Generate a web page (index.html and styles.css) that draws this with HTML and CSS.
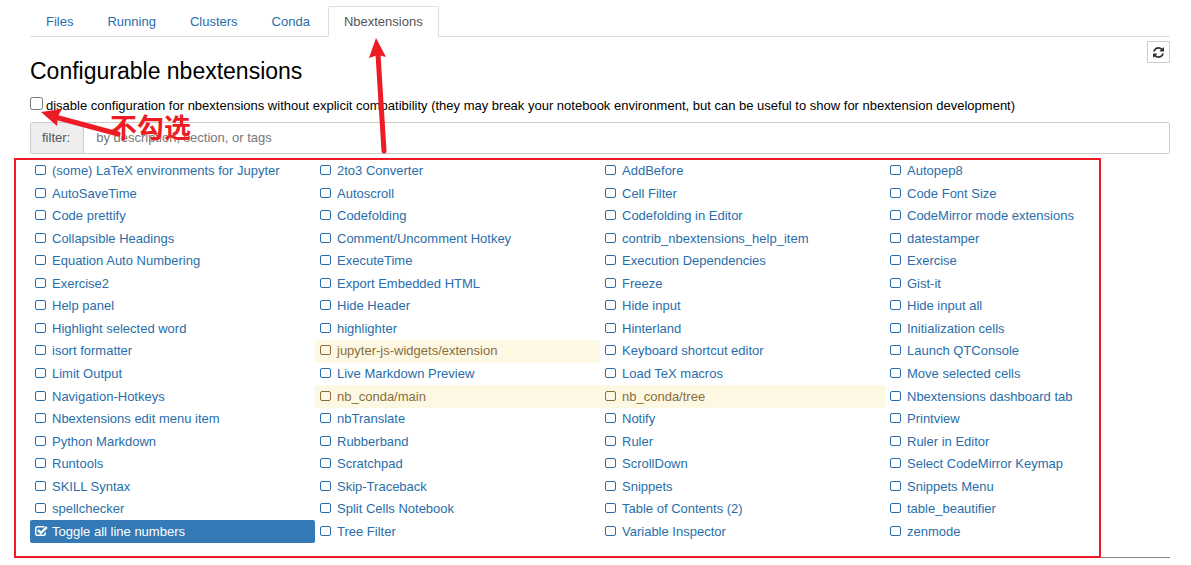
FILE: index.html
```
<!DOCTYPE html>
<html lang="en">
<head>
<meta charset="utf-8">
<title>Nbextensions</title>
<link rel="stylesheet" href="styles.css">
</head>
<body>
<div class="page">
  <nav class="tabs">
    <a class="tab" href="#files">Files</a>
    <a class="tab" href="#running">Running</a>
    <a class="tab" href="#clusters">Clusters</a>
    <a class="tab" href="#conda">Conda</a>
    <a class="tab tab-active" href="#nbextensions" aria-current="page">Nbextensions</a>
  </nav>
  <main>
    <div class="header">
      <h1 class="title">Configurable nbextensions</h1>
      <button class="refresh" type="button" aria-label="Refresh">
        <svg class="refresh-icon" viewBox="0 0 1536 1536" aria-hidden="true"><path fill="currentColor" d="M1511 928q0 5-1 7-64 268-268 434.500T764 1536q-146 0-282.500-55T238 1324l-129 129q-19 19-45 19t-45-19-19-45V960q0-26 19-45t45-19h448q26 0 45 19t19 45-19 45l-137 137q71 66 161 102t187 36q134 0 250-65t186-179q11-17 53-117 8-23 30-23h192q13 0 22.500 9.500t9.500 22.500zm25-800v448q0 26-19 45t-45 19h-448q-26 0-45-19t-19-45 19-45l138-138Q969 256 768 256q-134 0-250 65T332 500q-11 17-53 117-8 23-30 23H50q-13 0-22.500-9.500T18 608v-7q65-268 270-434.500T768 0q146 0 284 55.500T1297 212l130-129q19-19 45-19t45 19 19 45z"/></svg>
      </button>
    </div>
    <label class="compat"><input class="compat-box" type="checkbox"><span>disable configuration for nbextensions without explicit compatibility (they may break your notebook environment, but can be useful to show for nbextension development)</span></label>
    <div class="filter">
      <label class="filter-label" for="filter">filter:</label>
      <input class="filter-input" id="filter" type="text" placeholder="by description, section, or tags">
    </div>
    <ul class="extensions">
      <li><label class="ext"><input class="box" type="checkbox">(some) LaTeX environments for Jupyter</label></li>
      <li><label class="ext"><input class="box" type="checkbox">2to3 Converter</label></li>
      <li><label class="ext"><input class="box" type="checkbox">AddBefore</label></li>
      <li><label class="ext"><input class="box" type="checkbox">Autopep8</label></li>
      <li><label class="ext"><input class="box" type="checkbox">AutoSaveTime</label></li>
      <li><label class="ext"><input class="box" type="checkbox">Autoscroll</label></li>
      <li><label class="ext"><input class="box" type="checkbox">Cell Filter</label></li>
      <li><label class="ext"><input class="box" type="checkbox">Code Font Size</label></li>
      <li><label class="ext"><input class="box" type="checkbox">Code prettify</label></li>
      <li><label class="ext"><input class="box" type="checkbox">Codefolding</label></li>
      <li><label class="ext"><input class="box" type="checkbox">Codefolding in Editor</label></li>
      <li><label class="ext"><input class="box" type="checkbox">CodeMirror mode extensions</label></li>
      <li><label class="ext"><input class="box" type="checkbox">Collapsible Headings</label></li>
      <li><label class="ext"><input class="box" type="checkbox">Comment/Uncomment Hotkey</label></li>
      <li><label class="ext"><input class="box" type="checkbox">contrib_nbextensions_help_item</label></li>
      <li><label class="ext"><input class="box" type="checkbox">datestamper</label></li>
      <li><label class="ext"><input class="box" type="checkbox">Equation Auto Numbering</label></li>
      <li><label class="ext"><input class="box" type="checkbox">ExecuteTime</label></li>
      <li><label class="ext"><input class="box" type="checkbox">Execution Dependencies</label></li>
      <li><label class="ext"><input class="box" type="checkbox">Exercise</label></li>
      <li><label class="ext"><input class="box" type="checkbox">Exercise2</label></li>
      <li><label class="ext"><input class="box" type="checkbox">Export Embedded HTML</label></li>
      <li><label class="ext"><input class="box" type="checkbox">Freeze</label></li>
      <li><label class="ext"><input class="box" type="checkbox">Gist-it</label></li>
      <li><label class="ext"><input class="box" type="checkbox">Help panel</label></li>
      <li><label class="ext"><input class="box" type="checkbox">Hide Header</label></li>
      <li><label class="ext"><input class="box" type="checkbox">Hide input</label></li>
      <li><label class="ext"><input class="box" type="checkbox">Hide input all</label></li>
      <li><label class="ext"><input class="box" type="checkbox">Highlight selected word</label></li>
      <li><label class="ext"><input class="box" type="checkbox">highlighter</label></li>
      <li><label class="ext"><input class="box" type="checkbox">Hinterland</label></li>
      <li><label class="ext"><input class="box" type="checkbox">Initialization cells</label></li>
      <li><label class="ext"><input class="box" type="checkbox">isort formatter</label></li>
      <li><label class="ext ext-warning"><input class="box" type="checkbox">jupyter-js-widgets/extension</label></li>
      <li><label class="ext"><input class="box" type="checkbox">Keyboard shortcut editor</label></li>
      <li><label class="ext"><input class="box" type="checkbox">Launch QTConsole</label></li>
      <li><label class="ext"><input class="box" type="checkbox">Limit Output</label></li>
      <li><label class="ext"><input class="box" type="checkbox">Live Markdown Preview</label></li>
      <li><label class="ext"><input class="box" type="checkbox">Load TeX macros</label></li>
      <li><label class="ext"><input class="box" type="checkbox">Move selected cells</label></li>
      <li><label class="ext"><input class="box" type="checkbox">Navigation-Hotkeys</label></li>
      <li><label class="ext ext-warning"><input class="box" type="checkbox">nb_conda/main</label></li>
      <li><label class="ext ext-warning"><input class="box" type="checkbox">nb_conda/tree</label></li>
      <li><label class="ext"><input class="box" type="checkbox">Nbextensions dashboard tab</label></li>
      <li><label class="ext"><input class="box" type="checkbox">Nbextensions edit menu item</label></li>
      <li><label class="ext"><input class="box" type="checkbox">nbTranslate</label></li>
      <li><label class="ext"><input class="box" type="checkbox">Notify</label></li>
      <li><label class="ext"><input class="box" type="checkbox">Printview</label></li>
      <li><label class="ext"><input class="box" type="checkbox">Python Markdown</label></li>
      <li><label class="ext"><input class="box" type="checkbox">Rubberband</label></li>
      <li><label class="ext"><input class="box" type="checkbox">Ruler</label></li>
      <li><label class="ext"><input class="box" type="checkbox">Ruler in Editor</label></li>
      <li><label class="ext"><input class="box" type="checkbox">Runtools</label></li>
      <li><label class="ext"><input class="box" type="checkbox">Scratchpad</label></li>
      <li><label class="ext"><input class="box" type="checkbox">ScrollDown</label></li>
      <li><label class="ext"><input class="box" type="checkbox">Select CodeMirror Keymap</label></li>
      <li><label class="ext"><input class="box" type="checkbox">SKILL Syntax</label></li>
      <li><label class="ext"><input class="box" type="checkbox">Skip-Traceback</label></li>
      <li><label class="ext"><input class="box" type="checkbox">Snippets</label></li>
      <li><label class="ext"><input class="box" type="checkbox">Snippets Menu</label></li>
      <li><label class="ext"><input class="box" type="checkbox">spellchecker</label></li>
      <li><label class="ext"><input class="box" type="checkbox">Split Cells Notebook</label></li>
      <li><label class="ext"><input class="box" type="checkbox">Table of Contents (2)</label></li>
      <li><label class="ext"><input class="box" type="checkbox">table_beautifier</label></li>
      <li><label class="ext ext-selected"><input class="box" type="checkbox" checked>Toggle all line numbers</label></li>
      <li><label class="ext"><input class="box" type="checkbox">Tree Filter</label></li>
      <li><label class="ext"><input class="box" type="checkbox">Variable Inspector</label></li>
      <li><label class="ext"><input class="box" type="checkbox">zenmode</label></li>
    </ul>
  </main>
  <svg class="arrows" width="460" height="160" aria-hidden="true">
    <g fill="#ed1c24" stroke="#ed1c24">
      <path d="M384 151L378 54" fill="none" stroke-width="5" stroke-linecap="round"/>
      <path d="M376 38L386 57L378 55L369 58Z" stroke="none"/>
      <path d="M118 134L55 117" fill="none" stroke-width="5" stroke-linecap="round"/>
      <path d="M41 112L62 109L58 116L57 126Z" stroke="none"/>
    </g>
  </svg>
  <span class="note" lang="zh">不勾选</span>
  <div class="frame"></div>
</div>
</body>
</html>
```
FILE: styles.css
```
* {
  box-sizing: border-box;
}

body {
  margin: 0;
  background: #fff;
  color: #000;
  font-family: "Liberation Sans", Arial, sans-serif;
  font-size: 13px;
  line-height: 18px;
}

.page {
  position: relative;
  padding: 6px 21px 0 30px;
}

.tabs {
  display: flex;
  gap: 2px;
  border-bottom: 1px solid #ddd;
}

.tab {
  margin-bottom: -1px;
  padding: 6px 15px 5px;
  border: 1px solid transparent;
  border-radius: 2px 2px 0 0;
  color: #296eaa;
  text-decoration: none;
}

.tab-active {
  border-color: #ddd #ddd #fff;
  background: #fff;
  color: #555;
}

.header {
  display: flex;
  justify-content: space-between;
  align-items: flex-start;
  padding-top: 4px;
}

.title {
  margin: 16px 0 11px;
  font-size: 23px;
  font-weight: 400;
  line-height: 28px;
}

.refresh {
  display: flex;
  align-items: center;
  justify-content: center;
  width: 23px;
  height: 22px;
  padding: 0;
  border: 1px solid #ccc;
  border-radius: 1px;
  background: #fff;
  color: #333;
}

.refresh-icon {
  width: 11px;
  height: 11px;
}

.compat {
  display: flex;
  align-items: flex-start;
  gap: 3px;
  margin-bottom: 7px;
}

.compat span {
  padding-top: 1px;
}

.compat-box {
  flex: none;
  width: 13px;
  height: 13px;
  margin: 1px 0 0;
}

.filter {
  display: flex;
  height: 32px;
  border: 1px solid #ccc;
  border-radius: 2px;
}

.filter-label {
  padding: 6px 13px 6px 11px;
  border-right: 1px solid #ccc;
  background: #eee;
  color: #555;
}

.filter-input {
  flex: 1;
  min-width: 0;
  padding: 0 12px;
  border: 0;
  background: #fff;
  color: #555;
  font: inherit;
}

.filter-input::placeholder {
  color: #777;
}

.extensions {
  display: grid;
  grid-template-columns: repeat(4, 1fr);
  grid-auto-rows: 1fr;
  min-height: 383px;
  margin: 6px 0 0;
  padding: 0;
  list-style: none;
}

main {
  padding-bottom: 14px;
  border-bottom: 1px solid #888;
}

.ext {
  display: flex;
  align-items: center;
  gap: 6px;
  height: 100%;
  padding: 0 5px;
  border-radius: 2px;
  color: #296eaa;
}

.ext-warning {
  background: #fcf8e3;
  color: #8a6d3b;
}

.ext-selected {
  background: #337ab7;
  color: #fff;
}

.box {
  appearance: none;
  flex: none;
  width: 11px;
  height: 10px;
  margin: 0 0 2px;
  border: 1px solid currentColor;
  border-radius: 2px;
  color: inherit;
}

.box:checked {
  width: 13px;
  margin-right: -2px;
  border: 0;
  border-radius: 0;
  background: url("data:image/svg+xml,%3Csvg xmlns='http://www.w3.org/2000/svg' viewBox='0 0 13 10' fill='none' stroke='white'%3E%3Cpath d='M9.500.9Q9 .7 8.500.7H2.500Q.7.700.7 2.500V7.500Q.7 9.300 2.500 9.300H8.500Q10.300 9.300 10.300 7.500V6.300' stroke-width='1.400'/%3E%3Cpath d='M2.900 4L5.900 6.900L11.900 1.200' stroke-width='2.400'/%3E%3C/svg%3E") center / 13px 10px no-repeat;
}

.arrows {
  position: absolute;
  top: 0;
  left: 0;
  pointer-events: none;
}

.note {
  position: absolute;
  top: 110px;
  left: 110px;
  color: #ed1c24;
  font-family: "Noto Sans CJK SC", sans-serif;
  font-size: 27px;
  font-weight: 700;
  line-height: 34px;
  pointer-events: none;
}

.frame {
  position: absolute;
  top: 158px;
  right: 90px;
  bottom: 0;
  left: 14px;
  border: 2px solid #ed1c24;
  pointer-events: none;
}
```
